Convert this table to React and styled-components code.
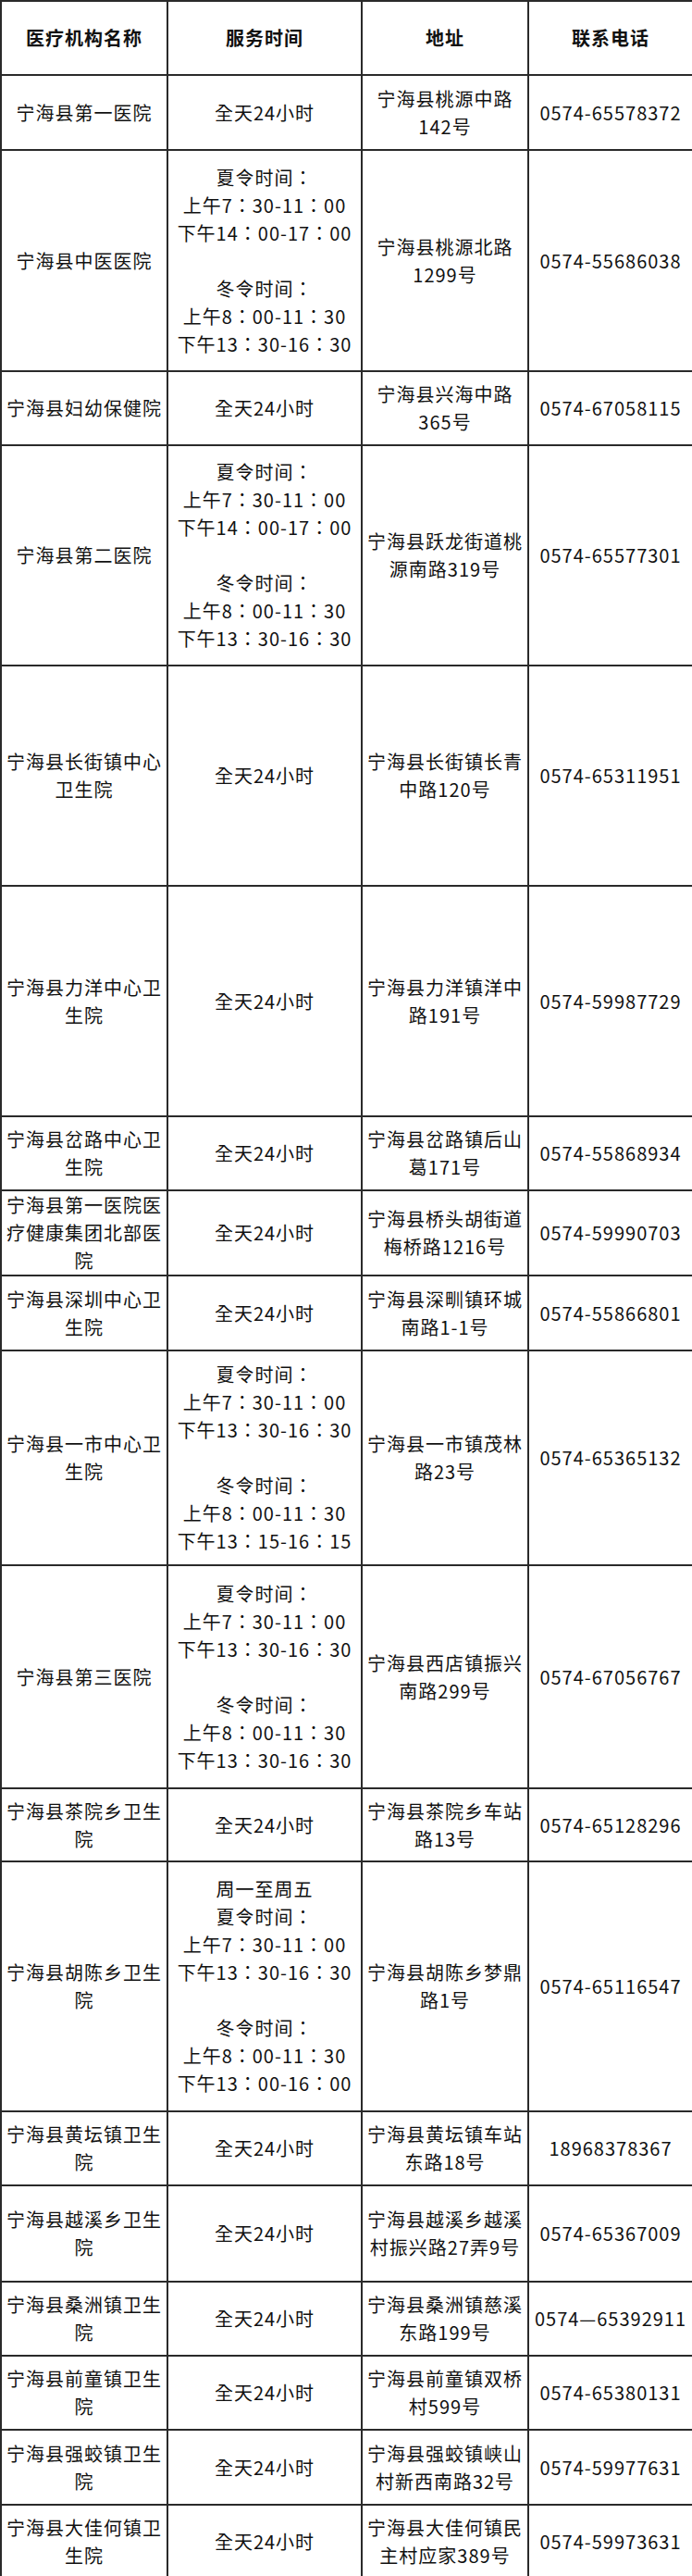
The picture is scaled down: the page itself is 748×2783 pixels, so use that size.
import React from 'react';
import styled, { createGlobalStyle } from 'styled-components';

const GlobalStyle = createGlobalStyle`
  html, body {
    margin: 0;
    padding: 0;
    background: #ffffff;
  }
`;

const Table = styled.table`
  width: 748px;
  border-collapse: collapse;
  table-layout: fixed;
  font-family: "Noto Sans CJK SC", "Noto Sans", sans-serif;
  font-size: 20px;
  line-height: 30px;
  letter-spacing: 1px;
  color: #111;
  border: 2px solid #1c1c1c;
`;

const Row = styled.tr`
  height: ${(p) => p.$h}px;
`;

const HeadCell = styled.th`
  border: 2px solid #2a2a2a;
  font-weight: 700;
  text-align: center;
  vertical-align: middle;
  padding: 0 5px;
`;

const Cell = styled.td`
  border: 2px solid #2a2a2a;
  text-align: center;
  vertical-align: middle;
  padding: 0 5px;
  white-space: ${(p) => (p.$nowrap ? 'nowrap' : 'normal')};
`;

// the full-width colon sits centred in its box in the original, as in the TC cut
const TimeCell = styled(Cell)`
  white-space: pre-line;
  font-family: "Noto Sans CJK TC", "Noto Sans CJK SC", sans-serif;
`;

const ALL_DAY = '全天24小时';

const TIME_A =
  '夏令时间：\n上午7：30-11：00\n下午14：00-17：00\n\n冬令时间：\n上午8：00-11：30\n下午13：30-16：30';
const TIME_B =
  '夏令时间：\n上午7：30-11：00\n下午13：30-16：30\n\n冬令时间：\n上午8：00-11：30\n下午13：15-16：15';
const TIME_C =
  '夏令时间：\n上午7：30-11：00\n下午13：30-16：30\n\n冬令时间：\n上午8：00-11：30\n下午13：30-16：30';
const TIME_D =
  '周一至周五\n夏令时间：\n上午7：30-11：00\n下午13：30-16：30\n\n冬令时间：\n上午8：00-11：30\n下午13：00-16：00';

const rows = [
  { h: 81, name: '宁海县第一医院', time: ALL_DAY, addr: '宁海县桃源中路142号', tel: '0574-65578372' },
  { h: 239, name: '宁海县中医医院', time: TIME_A, addr: '宁海县桃源北路1299号', tel: '0574-55686038' },
  { h: 80, name: '宁海县妇幼保健院', time: ALL_DAY, addr: '宁海县兴海中路365号', tel: '0574-67058115' },
  { h: 238, name: '宁海县第二医院', time: TIME_A, addr: '宁海县跃龙街道桃源南路319号', tel: '0574-65577301' },
  { h: 238, name: '宁海县长街镇中心卫生院', time: ALL_DAY, addr: '宁海县长街镇长青中路120号', tel: '0574-65311951' },
  { h: 249, name: '宁海县力洋中心卫生院', time: ALL_DAY, addr: '宁海县力洋镇洋中路191号', tel: '0574-59987729' },
  { h: 80, name: '宁海县岔路中心卫生院', time: ALL_DAY, addr: '宁海县岔路镇后山葛171号', tel: '0574-55868934' },
  { h: 89, name: '宁海县第一医院医疗健康集团北部医院', time: ALL_DAY, addr: '宁海县桥头胡街道梅桥路1216号', tel: '0574-59990703' },
  { h: 81, name: '宁海县深圳中心卫生院', time: ALL_DAY, addr: '宁海县深甽镇环城南路1-1号', tel: '0574-55866801' },
  { h: 232, name: '宁海县一市中心卫生院', time: TIME_B, addr: '宁海县一市镇茂林路23号', tel: '0574-65365132' },
  { h: 241, name: '宁海县第三医院', time: TIME_C, addr: '宁海县西店镇振兴南路299号', tel: '0574-67056767' },
  { h: 79, name: '宁海县茶院乡卫生院', time: ALL_DAY, addr: '宁海县茶院乡车站路13号', tel: '0574-65128296' },
  { h: 270, name: '宁海县胡陈乡卫生院', time: TIME_D, addr: '宁海县胡陈乡梦鼎路1号', tel: '0574-65116547' },
  { h: 80, name: '宁海县黄坛镇卫生院', time: ALL_DAY, addr: '宁海县黄坛镇车站东路18号', tel: '18968378367' },
  { h: 104, name: '宁海县越溪乡卫生院', time: ALL_DAY, addr: '宁海县越溪乡越溪村振兴路27弄9号', tel: '0574-65367009' },
  { h: 80, name: '宁海县桑洲镇卫生院', time: ALL_DAY, addr: '宁海县桑洲镇慈溪东路199号', tel: '0574—65392911' },
  { h: 80, name: '宁海县前童镇卫生院', time: ALL_DAY, addr: '宁海县前童镇双桥村599号', tel: '0574-65380131' },
  { h: 81, name: '宁海县强蛟镇卫生院', time: ALL_DAY, addr: '宁海县强蛟镇峡山村新西南路32号', tel: '0574-59977631' },
  { h: 80, name: '宁海县大佳何镇卫生院', time: ALL_DAY, addr: '宁海县大佳何镇民主村应家389号', tel: '0574-59973631' },
];

const App = () => (
  <>
    <GlobalStyle />
    <Table>
      <colgroup>
        <col style={{ width: 180 }} />
        <col style={{ width: 210 }} />
        <col style={{ width: 180 }} />
        <col style={{ width: 178 }} />
      </colgroup>
      <thead>
        <Row $h={80}>
          <HeadCell>医疗机构名称</HeadCell>
          <HeadCell>服务时间</HeadCell>
          <HeadCell>地址</HeadCell>
          <HeadCell>联系电话</HeadCell>
        </Row>
      </thead>
      <tbody>
        {rows.map((r) => (
          <Row key={r.name} $h={r.h}>
            <Cell>{r.name}</Cell>
            <TimeCell>{r.time}</TimeCell>
            <Cell>{r.addr}</Cell>
            <Cell $nowrap>{r.tel}</Cell>
          </Row>
        ))}
      </tbody>
    </Table>
  </>
);

export default App;
